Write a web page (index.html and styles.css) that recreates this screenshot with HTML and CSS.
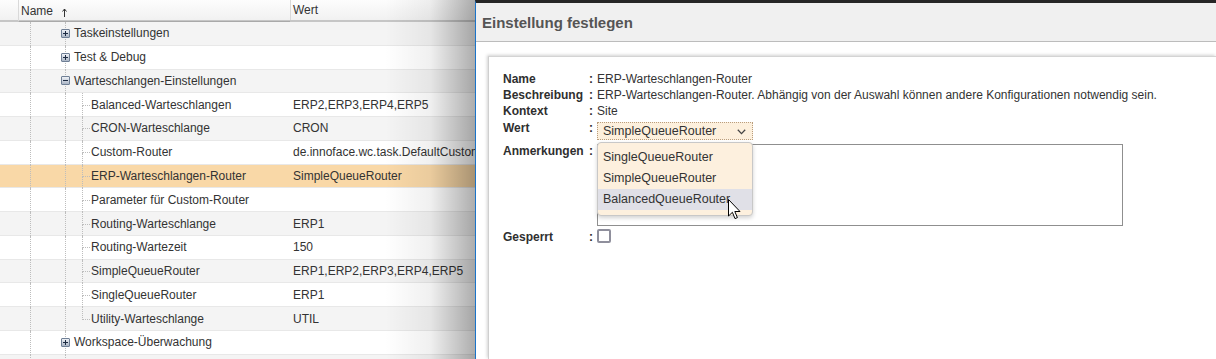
FILE: index.html
```html
<!DOCTYPE html>
<html lang="de">
<head>
  <meta charset="UTF-8" />
  <title>Einstellungen</title>
  <link rel="stylesheet" href="styles.css">
</head>
<body>
  <div class="page">

    <!-- Einstellungsbaum (links) -->
    <div class="grid">
      <div class="grid-head">
        <div class="hcell hcell-first"></div>
        <div class="hcell hcell-name">
          Name
          <svg class="sort" width="5" height="9" viewBox="0 0 5 9"><path d="M2.5 1v8M0.5 3.5 2.5 1 4.5 3.5" fill="none" stroke="#333" stroke-width="1"/></svg>
        </div>
        <div class="hcell hcell-val">Wert</div>
      </div>

      <div class="row alt">
        <div class="name"><span class="lead"></span><span class="trunk"></span><span class="tog plus"></span><span class="label">Taskeinstellungen</span></div>
        <div class="val"></div>
      </div>
      <div class="row">
        <div class="name"><span class="lead"></span><span class="trunk"></span><span class="tog plus"></span><span class="label">Test &amp; Debug</span></div>
        <div class="val"></div>
      </div>
      <div class="row alt">
        <div class="name"><span class="lead"></span><span class="trunk"></span><span class="tog"></span><span class="label">Warteschlangen-Einstellungen</span></div>
        <div class="val"></div>
      </div>
      <div class="row">
        <div class="name"><span class="lead"></span><span class="trunk"></span><span class="branch"></span><span class="conn"><i></i><i></i></span><span class="label">Balanced-Warteschlangen</span></div>
        <div class="val">ERP2,ERP3,ERP4,ERP5</div>
      </div>
      <div class="row alt">
        <div class="name"><span class="lead"></span><span class="trunk"></span><span class="branch"></span><span class="conn"><i></i><i></i></span><span class="label">CRON-Warteschlange</span></div>
        <div class="val">CRON</div>
      </div>
      <div class="row">
        <div class="name"><span class="lead"></span><span class="trunk"></span><span class="branch"></span><span class="conn"><i></i><i></i></span><span class="label">Custom-Router</span></div>
        <div class="val">de.innoface.wc.task.DefaultCustomRouter</div>
      </div>
      <div class="row selected">
        <div class="name"><span class="lead"></span><span class="trunk"></span><span class="branch"></span><span class="conn"><i></i><i></i></span><span class="label">ERP-Warteschlangen-Router</span></div>
        <div class="val">SimpleQueueRouter</div>
      </div>
      <div class="row">
        <div class="name"><span class="lead"></span><span class="trunk"></span><span class="branch"></span><span class="conn"><i></i><i></i></span><span class="label">Parameter für Custom-Router</span></div>
        <div class="val"></div>
      </div>
      <div class="row alt">
        <div class="name"><span class="lead"></span><span class="trunk"></span><span class="branch"></span><span class="conn"><i></i><i></i></span><span class="label">Routing-Warteschlange</span></div>
        <div class="val">ERP1</div>
      </div>
      <div class="row">
        <div class="name"><span class="lead"></span><span class="trunk"></span><span class="branch"></span><span class="conn"><i></i><i></i></span><span class="label">Routing-Wartezeit</span></div>
        <div class="val">150</div>
      </div>
      <div class="row alt">
        <div class="name"><span class="lead"></span><span class="trunk"></span><span class="branch"></span><span class="conn"><i></i><i></i></span><span class="label">SimpleQueueRouter</span></div>
        <div class="val">ERP1,ERP2,ERP3,ERP4,ERP5</div>
      </div>
      <div class="row">
        <div class="name"><span class="lead"></span><span class="trunk"></span><span class="branch"></span><span class="conn"><i></i><i></i></span><span class="label">SingleQueueRouter</span></div>
        <div class="val">ERP1</div>
      </div>
      <div class="row alt">
        <div class="name"><span class="lead"></span><span class="trunk"></span><span class="branch"></span><span class="conn last"><i></i><i></i></span><span class="label">Utility-Warteschlange</span></div>
        <div class="val">UTIL</div>
      </div>
      <div class="row">
        <div class="name"><span class="lead"></span><span class="trunk"></span><span class="tog plus"></span><span class="label">Workspace-Überwachung</span></div>
        <div class="val"></div>
      </div>
      <div class="row alt">
        <div class="name"><span class="lead"></span><span class="trunk"></span></div>
        <div class="val"></div>
      </div>
    </div>

    <!-- Dialog: Einstellung festlegen -->
    <div class="dialog">
      <div class="dialog-title">Einstellung festlegen</div>
      <div class="dialog-body">
        <div class="panel">
          <div class="form">
            <div class="lbl">Name</div><div class="colon">:</div>
            <div class="fval">ERP-Warteschlangen-Router</div>

            <div class="lbl">Beschreibung</div><div class="colon">:</div>
            <div class="fval">ERP-Warteschlangen-Router. Abhängig von der Auswahl können andere Konfigurationen notwendig sein.</div>

            <div class="lbl">Kontext</div><div class="colon">:</div>
            <div class="fval">Site</div>

            <div class="lbl lbl-wert">Wert</div><div class="colon lbl-wert">:</div>
            <div class="fval select-wrap">
              <div class="select">
                <span>SimpleQueueRouter</span>
                <svg width="9" height="6" viewBox="0 0 9 6"><path d="M0.8 0.8 4.5 4.6 8.2 0.8" fill="none" stroke="#444" stroke-width="1.3"/></svg>
              </div>
              <!-- geöffnete Auswahlliste -->
              <div class="dropdown">
                <div class="opt">SingleQueueRouter</div>
                <div class="opt">SimpleQueueRouter</div>
                <div class="opt hover">BalancedQueueRouter</div>
                <svg class="cursor" width="13" height="21" viewBox="0 0 13 21"><path d="M0.5 0.5V17L4.4 13.3 7 19.6 9.4 18.6 6.8 12.5H12Z" fill="#fff" stroke="#000" stroke-width="1" stroke-linejoin="round"/></svg>
              </div>
            </div>

            <div class="lbl lbl-anm">Anmerkungen</div><div class="colon lbl-anm">:</div>
            <div class="fval"><div class="textarea"></div></div>

            <div class="lbl lbl-ges">Gesperrt</div><div class="colon lbl-ges">:</div>
            <div class="fval"><div class="checkbox"></div></div>
          </div>
        </div>
      </div>
    </div>

  </div>
</body>
</html>
```

FILE: styles.css
```css
/* --- Grunddesign --- */
body {
  margin: 0;
  padding: 0;
  font-family: "Liberation Sans", Arial, sans-serif;
  font-size: 12px;
  color: #333;
  background: #fff;
  overflow: hidden;
}
.page {
  display: flex;
  width: 1216px;
  height: 359px;
  overflow: hidden;
}

/* --- Baum / Tabelle links --- */
.grid {
  flex: none;
  width: 475px;
  overflow: hidden;
  background: #fff;
}
.grid-head {
  display: flex;
  height: 22px;
  box-sizing: border-box;
  border-bottom: 2px solid #c6c6c6;
  background: linear-gradient(#fdfdfd, #f1f1f1);
}
.hcell {
  display: flex;
  align-items: center;
  white-space: nowrap;
}
.hcell-first {
  width: 18px;
}
.hcell-name {
  width: 272px;
  box-sizing: border-box;
  padding-left: 2px;
  border-left: 1px solid #d9d9d9;
  border-bottom: 1px solid #a9a9a9;
  margin-bottom: -2px;
}
.hcell-name .sort {
  margin-left: 9px;
  margin-top: 3px;
}
.hcell-val {
  flex: 1;
  padding-left: 2px;
  border-left: 1px solid #d9d9d9;
}

.row {
  display: flex;
  height: 23.77px;
  box-sizing: border-box;
  border-bottom: 1px solid #e8e8e8;
  background: #fff;
}
.row.alt {
  background: #f4f4f4;
}
.row.selected {
  background: #f9d8a7;
}
.name {
  flex: none;
  width: 290px;
  display: flex;
  white-space: nowrap;
}
.val {
  flex: 1;
  display: flex;
  align-items: center;
  padding-left: 3px;
  white-space: nowrap;
}
.label {
  align-self: center;
}

/* Baumlinien (gepunktet) */
.lead {
  flex: none;
  width: 30px;
}
.trunk {
  flex: none;
  width: 36px;
  box-sizing: border-box;
  border-left: 1px dotted #bdbdbd;
  border-right: 1px dotted #bdbdbd;
  margin-bottom: -1px;
}
.branch {
  flex: none;
  width: 16px;
}
.conn {
  flex: none;
  width: 9px;
  display: flex;
  flex-direction: column;
  margin-bottom: -1px;
}
.conn i {
  flex: 1;
  width: 8px;
  box-sizing: border-box;
  border-left: 1px dotted #bdbdbd;
}
.conn i:first-child {
  border-bottom: 1px dotted #bdbdbd;
}
.conn.last i:last-child {
  border-left: none;
}

/* Auf-/Zuklapp-Symbol */
.tog {
  flex: none;
  position: relative;
  align-self: center;
  width: 9px;
  height: 9px;
  box-sizing: border-box;
  margin-left: -5px;
  margin-right: 4px;
  border: 1px solid #6f7f95;
  border-radius: 1px;
  background: linear-gradient(#eef1f6, #aab5c5);
}
.tog::before {
  content: "";
  position: absolute;
  left: 1px;
  top: 3px;
  width: 5px;
  height: 1px;
  background: #1d2b42;
}
.tog.plus::after {
  content: "";
  position: absolute;
  left: 3px;
  top: 1px;
  width: 1px;
  height: 5px;
  background: #1d2b42;
}

/* --- Dialog --- */
.dialog {
  flex: 1;
  position: relative;
  z-index: 1;
  display: flex;
  flex-direction: column;
  border-left: 1px solid #1b74c9;
  border-top: 3px solid #262626;
  background: #fff;
}
/* Schatten des Dialogs über der Tabelle */
.dialog::before {
  content: "";
  position: absolute;
  top: -3px;
  bottom: 0;
  right: calc(100% + 1px);
  width: 90px;
  background: linear-gradient(to right, rgba(0, 0, 0, 0), rgba(0, 0, 0, 0.06) 50%, rgba(0, 0, 0, 0.32));
}
.dialog-title {
  height: 38px;
  display: flex;
  align-items: center;
  padding-left: 6px;
  background: #f0f0f0;
  border-bottom: 1px solid #bcbcbc;
  color: #555;
  font-size: 15px;
  font-weight: bold;
}
.dialog-body {
  flex: 1;
  padding: 14px 0 0 12px;
  display: flex;
}
.panel {
  flex: 1;
  border-top: 1px solid #d4d4d4;
  border-left: 1px solid #cfcfcf;
  box-shadow: -1px -1px 3px rgba(0, 0, 0, 0.18);
  padding: 14px 0 0 14px;
}

/* Formular als Raster: Label | Doppelpunkt | Wert */
.form {
  display: grid;
  grid-template-columns: 85px 9px auto;
  align-items: start;
  line-height: 16px;
}
.lbl,
.colon {
  font-weight: bold;
  color: #2f2f2f;
}
.colon {
  padding-left: 1px;
}
.lbl-wert {
  margin-top: 1px;
}
.lbl-anm {
  margin-top: 3px;
}
.lbl-ges {
  margin-top: 3px;
}

.select-wrap {
  position: relative;
  justify-self: start;
}
.select {
  width: 156px;
  height: 18px;
  margin-top: 3px;
  box-sizing: border-box;
  display: flex;
  align-items: center;
  justify-content: space-between;
  padding: 0 6px 0 5px;
  border: 1px dotted #b99d7d;
  background: #fdf0dd;
  font-size: 12.5px;
}
.select svg {
  margin-top: 1px;
}
.dropdown {
  position: absolute;
  top: 23px;
  left: 0;
  width: 156px;
  box-sizing: border-box;
  padding: 4px 0 5px;
  border: 1px solid #c8c8c8;
  border-radius: 4px;
  background: #fdf0de;
  box-shadow: 0 2px 4px rgba(0, 0, 0, 0.18);
  font-size: 12.5px;
  z-index: 5;
}
.opt {
  height: 21px;
  line-height: 21px;
  padding-left: 5px;
}
.opt.hover {
  background: #e0e0e7;
}
.cursor {
  position: absolute;
  left: 130px;
  top: 56px;
}

.textarea {
  width: 526px;
  height: 82px;
  margin-top: 4px;
  box-sizing: border-box;
  border: 1px solid #8f8f8f;
  background: #fff;
}
.checkbox {
  width: 14px;
  height: 14px;
  margin-top: 3px;
  box-sizing: border-box;
  border: 2px solid #8f8f9c;
  border-radius: 2px;
  background: #fff;
}
```
